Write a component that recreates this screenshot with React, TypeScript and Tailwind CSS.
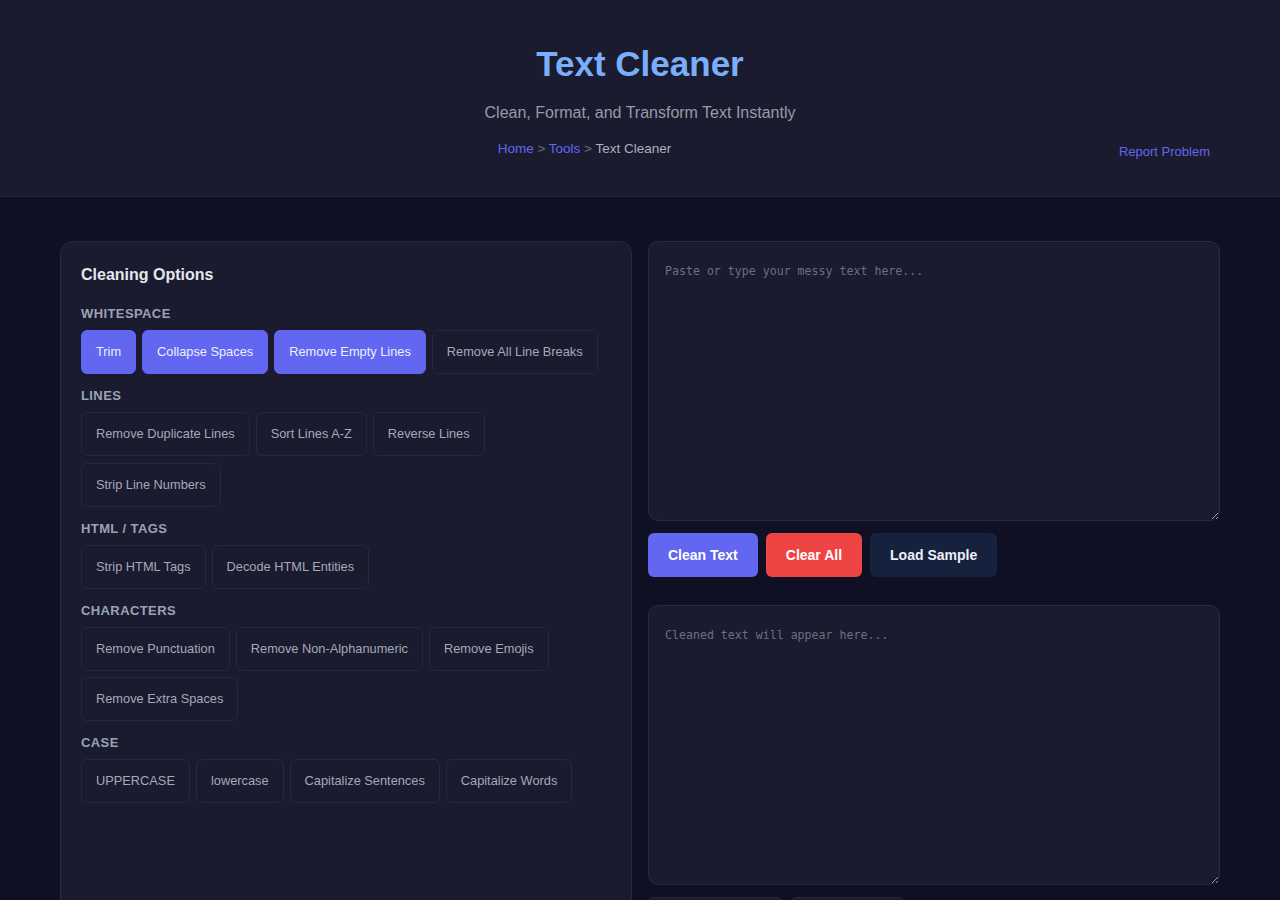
import clsx from 'clsx'

type Section = { title: string; options: string[] }

const sections: Section[] = [
  { title: 'Whitespace', options: ['Trim', 'Collapse Spaces', 'Remove Empty Lines', 'Remove All Line Breaks'] },
  { title: 'Lines', options: ['Remove Duplicate Lines', 'Sort Lines A-Z', 'Reverse Lines', 'Strip Line Numbers'] },
  { title: 'HTML / Tags', options: ['Strip HTML Tags', 'Decode HTML Entities'] },
  { title: 'Characters', options: ['Remove Punctuation', 'Remove Non-Alphanumeric', 'Remove Emojis', 'Remove Extra Spaces'] },
  { title: 'Case', options: ['UPPERCASE', 'lowercase', 'Capitalize Sentences', 'Capitalize Words'] },
]

const active = new Set(['Trim', 'Collapse Spaces', 'Remove Empty Lines'])

function OptionButton({ label }: { label: string }) {
  const on = active.has(label)
  return (
    <button
      type="button"
      className={clsx(
        'rounded-md border px-[14px] py-3 text-[12.8px] leading-[18px]',
        on ? 'border-[#6366f1] bg-[#6366f1] text-[#eef0ff]' : 'border-[#232a3b] bg-[#1a1b2e] text-[#a3aab8]'
      )}
    >
      {label}
    </button>
  )
}

export default function App() {
  return (
    <div className="min-h-screen bg-[#0f1023] font-['Liberation_Sans',Arial,sans-serif]">
      <header className="border-b border-[#232a3d] bg-[#1a1b2e] pt-[43px] pb-[34px]">
        <h1 className="text-center text-[35px] font-bold leading-[42px] text-[#7aaefc]">Text Cleaner</h1>
        <p className="mt-4 text-center text-base leading-6 text-[#9a9aa6]">Clean, Format, and Transform Text Instantly</p>
        <div className="mt-[14px] flex items-start gap-5 px-[70px]">
          <nav className="flex-1 text-center text-[13.5px] leading-5">
            <a className="text-[#6366f1]">Home</a>
            <span className="text-[#6b6f80]"> &gt; </span>
            <a className="text-[#6366f1]">Tools</a>
            <span className="text-[#6b6f80]"> &gt; </span>
            <span className="text-[#acafbc]">Text Cleaner</span>
          </nav>
          <a className="mt-[3px] text-[13px] leading-5 text-[#6366f1]">Report Problem</a>
        </div>
      </header>

      <main className="mx-auto grid w-[1160px] grid-cols-2 gap-4 pt-11 pb-10">
        <section className="rounded-xl border border-[#232a3d] bg-[#1a1b2e] px-5 pt-[21px] pb-5">
          <h2 className="mb-[19px] text-base font-bold leading-6 text-[#e5e7eb]">Cleaning Options</h2>
          <div className="flex flex-col gap-[14px]">
            {sections.map((section) => (
              <div key={section.title}>
                <div className="mb-[9px] text-[13px] font-bold uppercase leading-[15px] tracking-[0.4px] text-[#9aa3b5]">{section.title}</div>
                <div className="flex flex-wrap gap-x-1.5 gap-y-[6.5px]">
                  {section.options.map((option) => (
                    <OptionButton key={option} label={option} />
                  ))}
                </div>
              </div>
            ))}
          </div>
        </section>

        <section className="flex flex-col">
          <textarea
            placeholder="Paste or type your messy text here..."
            className="h-[280px] w-full rounded-[10px] border border-[#252b40] bg-[#1a1b2e] px-4 pt-[20px] pb-4 font-['DejaVu_Sans_Mono',monospace] text-[11.6px] leading-[1.6] text-[#d1d5db] outline-none placeholder:text-[#6b6f80]"
          />
          <div className="mt-3 flex gap-2">
            <button type="button" className="rounded-md bg-[#6366f1] px-5 py-3 text-sm font-bold leading-5 text-white">Clean Text</button>
            <button type="button" className="rounded-md bg-[#ef4444] px-5 py-3 text-sm font-bold leading-5 text-white">Clear All</button>
            <button type="button" className="rounded-md bg-[#16213e] px-5 py-3 text-sm font-bold leading-5 text-[#eef0f5]">Load Sample</button>
          </div>
          <textarea
            readOnly
            placeholder="Cleaned text will appear here..."
            className="mt-7 h-[280px] w-full rounded-[10px] border border-[#252b40] bg-[#1a1b2e] px-4 pt-[20px] pb-4 font-['DejaVu_Sans_Mono',monospace] text-[11.6px] leading-[1.6] text-[#d1d5db] outline-none placeholder:text-[#6b6f80]"
          />
          <div className="mt-3 flex gap-2">
            <button type="button" className="w-[135px] rounded-md border border-[#232a3d] bg-[#1a1b2e] py-3 text-sm font-bold leading-5 text-[#d1d5db]">Copy Output</button>
            <button type="button" className="w-[113px] rounded-md border border-[#232a3d] bg-[#1a1b2e] py-3 text-sm font-bold leading-5 text-[#d1d5db]">Download</button>
          </div>
        </section>
      </main>
    </div>
  )
}
